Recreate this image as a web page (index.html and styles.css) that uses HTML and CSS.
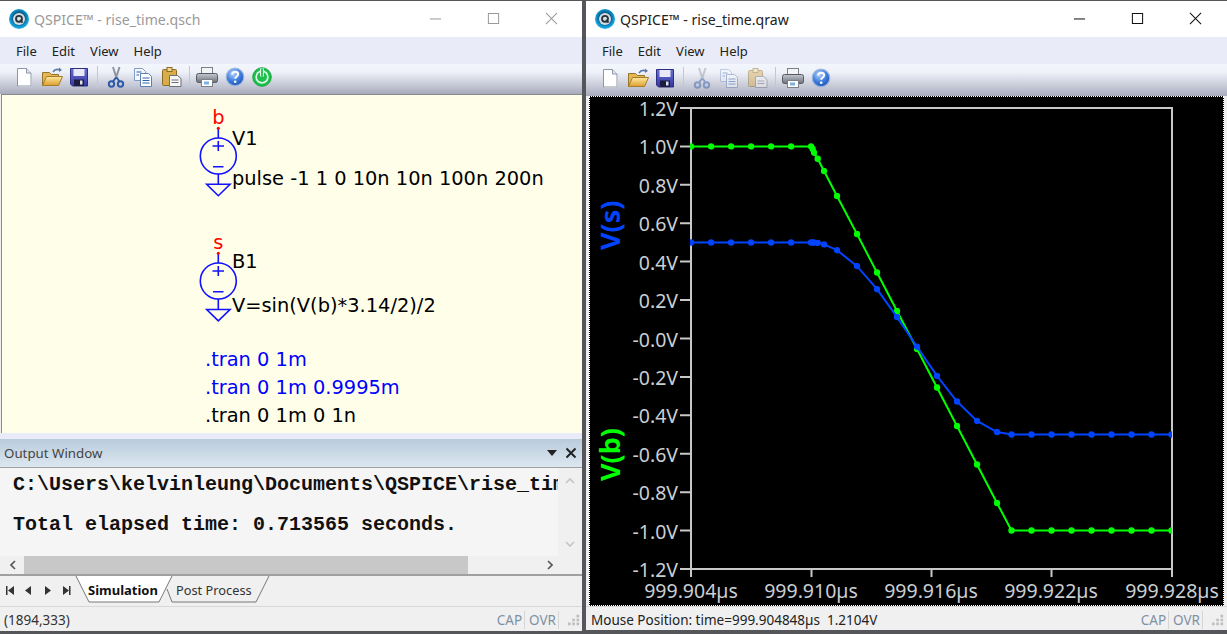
FILE: index.html
```html
<!DOCTYPE html>
<html lang="en">
<head>
<meta charset="utf-8">
<title>QSPICE</title>
<link rel="stylesheet" href="styles.css">
</head>
<body>
<svg class="defs" width="0" height="0" aria-hidden="true">
  <defs>
    <radialGradient id="lg" cx="50%" cy="45%" r="55%"><stop offset="0.55" stop-color="#0b5f8c"/><stop offset="0.8" stop-color="#0f9ad6"/><stop offset="1" stop-color="#27b2e4"/></radialGradient>
    <linearGradient id="fold" x1="0" y1="0" x2="0" y2="1"><stop offset="0" stop-color="#ffe9a0"/><stop offset="1" stop-color="#dd9f2e"/></linearGradient>
    <linearGradient id="fl" x1="0" y1="0" x2="0" y2="1"><stop offset="0" stop-color="#6a6ed8"/><stop offset="1" stop-color="#3438a0"/></linearGradient>
    <linearGradient id="pr" x1="0" y1="0" x2="0" y2="1"><stop offset="0" stop-color="#c4c8d0"/><stop offset="1" stop-color="#6c7078"/></linearGradient>
    <radialGradient id="hp" cx="40%" cy="30%" r="75%"><stop offset="0" stop-color="#b8d4f8"/><stop offset="0.55" stop-color="#3f7fe0"/><stop offset="1" stop-color="#1a4fb0"/></radialGradient>
    <symbol id="i-logo" viewBox="0 0 20 20">
      <circle cx="10" cy="10" r="10" fill="url(#lg)"/>
      <circle cx="10" cy="10" r="6" fill="#d5dde2"/>
      <circle cx="10" cy="9.8" r="3" fill="none" stroke="#27323a" stroke-width="1.8"/>
      <path d="M11 11l2.6 2.6" stroke="#27323a" stroke-width="1.8"/>
    </symbol>
    <symbol id="i-new" viewBox="0 0 24 24">
      <path d="M5.500 3.500h9l4.500 4.500v13h-13.500z" fill="#fff" stroke="#8d96a8"/>
      <path d="M14.500 3.500v4.500h4.500" fill="#e3e8f0" stroke="#8d96a8"/>
      <path d="M19.500 9v12.500h-13" fill="none" stroke="#c2c6ce"/>
    </symbol>
    <symbol id="i-open" viewBox="0 0 24 24">
      <path d="M2.500 20.500v-13h7l2 2h7v3" fill="#e8b64e" stroke="#94752e"/>
      <path d="M2.500 20.500l4-9h16l-4 9z" fill="url(#fold)" stroke="#a47c2a"/>
      <path d="M13 7c1.500-2.500 4.500-3 7-2" fill="none" stroke="#5c78a8" stroke-width="1.500"/>
      <path d="M19 2.500l3 2.500-3 2z" fill="#5c78a8"/>
    </symbol>
    <symbol id="i-save" viewBox="0 0 24 24">
      <path d="M3.500 3.500h17v17.500h-15l-2-2z" fill="url(#fl)" stroke="#2c2f80"/>
      <rect x="6.500" y="4" width="11" height="7" fill="#e7e9f6"/>
      <rect x="7" y="14.500" width="10" height="6.500" fill="#1c1c40"/>
      <rect x="13" y="15.500" width="2.500" height="4" fill="#dfe1ec"/>
    </symbol>
    <symbol id="i-cut" viewBox="0 0 24 24">
      <path d="M9 2l3.500 11M15.500 2l-3.500 11" stroke="#8c94a2" stroke-width="2" fill="none"/>
      <path d="M12 12.500l-3 4M12.500 12.500l3 4" stroke="#2e5aa8" stroke-width="2"/>
      <circle cx="7.500" cy="19" r="2.700" fill="none" stroke="#2e5aa8" stroke-width="2"/>
      <circle cx="16.500" cy="19" r="2.700" fill="none" stroke="#2e5aa8" stroke-width="2"/>
    </symbol>
    <symbol id="i-copy" viewBox="0 0 24 24">
      <path d="M3.500 3.500h8l3 3v9h-11z" fill="#f4f7fc" stroke="#7f9cc8"/>
      <path d="M9.500 8.500h8l3 3v10h-11z" fill="#fff" stroke="#5c7fb4"/>
      <path d="M5.500 7h5M5.500 10h2.500M11.500 13h7M11.500 15.500h7M11.500 18h7" stroke="#2e62b0" stroke-width="1.200"/>
    </symbol>
    <symbol id="i-paste" viewBox="0 0 24 24">
      <rect x="3.500" y="4.500" width="14" height="16" rx="1" fill="#d9ad4c" stroke="#8b6a22"/>
      <rect x="8" y="2.500" width="5" height="4" fill="#f0d890" stroke="#8b6a22"/>
      <path d="M10.500 10.500h8l3.500 3v8h-11.500z" fill="#f6f6f6" stroke="#6a6f7a"/>
      <path d="M12.500 15h7M12.500 17.500h7" stroke="#6a6f7a"/>
    </symbol>
    <symbol id="i-print" viewBox="0 0 24 24">
      <rect x="6.500" y="2.500" width="11" height="7" fill="#f4f4f6" stroke="#7c808a"/>
      <rect x="1.500" y="8.500" width="21" height="9" rx="2" fill="url(#pr)" stroke="#565a62"/>
      <rect x="6.500" y="14.500" width="11" height="7" fill="#fff" stroke="#7c808a"/>
      <rect x="9" y="16.500" width="5" height="3" fill="#7fb0e0"/>
    </symbol>
    <symbol id="i-help" viewBox="0 0 20 20">
      <circle cx="10" cy="10" r="8.800" fill="url(#hp)" stroke="#9db8de" stroke-width="1.200"/>
      <path d="M7 7.500c.3-2 1.600-2.800 3.200-2.800 1.800 0 3 1 3 2.500 0 2.200-3 2.300-3 4.500" fill="none" stroke="#fff" stroke-width="2"/>
      <circle cx="10.200" cy="14.700" r="1.300" fill="#fff"/>
    </symbol>
    <symbol id="i-power" viewBox="0 0 20 20">
      <circle cx="10" cy="10" r="9.300" fill="#1cc04c" stroke="#0e9a38" stroke-width="0.800"/>
      <circle cx="10" cy="10" r="6.700" fill="#dff7e4"/>
      <circle cx="10" cy="10" r="5" fill="#1cc04c"/>
      <path d="M10 1.500v8" stroke="#dff7e4" stroke-width="4"/>
      <path d="M10 2v7.500" stroke="#1cc04c" stroke-width="1.800"/>
    </symbol>
    <symbol id="i-grip" viewBox="0 0 14 14">
      <path fill="#bdbdbd" d="M10 1h3v3h-3zM5 5.500h3v3h-3zM10 5.500h3v3h-3zM0 10h3v3h-3zM5 10h3v3h-3zM10 10h3v3h-3z"/>
    </symbol>
    <marker id="dot-g" viewBox="-3.500 -3.500 7 7" markerWidth="7" markerHeight="7" markerUnits="userSpaceOnUse"><circle r="3.200" fill="#00ff00"/></marker>
    <marker id="dot-b" viewBox="-3.500 -3.500 7 7" markerWidth="7" markerHeight="7" markerUnits="userSpaceOnUse"><circle r="3.200" fill="#0044ff"/></marker>
    <clipPath id="plot-clip"><rect x="690" y="100" width="482" height="480"/></clipPath>
  </defs>
</svg>

<section class="window win-sch">
  <header class="title title-off">
    <svg class="logo"><use href="#i-logo"/></svg>
    <span class="title-text">QSPICE™ - rise_time.qsch</span>
    <div class="caption">
      <svg class="cap-btn" viewBox="0 0 14 14"><path d="M1 7.500h12"/></svg>
      <svg class="cap-btn" viewBox="0 0 14 14"><path d="M1.500 1.500h11v11h-11z"/></svg>
      <svg class="cap-btn" viewBox="0 0 14 14"><path d="M1 1l12 12M13 1l-12 12"/></svg>
    </div>
  </header>
  <nav class="menu"><span>File</span><span>Edit</span><span>View</span><span>Help</span></nav>
  <div class="toolbar">
    <svg class="tool"><use href="#i-new"/></svg>
    <svg class="tool"><use href="#i-open"/></svg>
    <svg class="tool"><use href="#i-save"/></svg>
    <i class="sep"></i>
    <svg class="tool"><use href="#i-cut"/></svg>
    <svg class="tool"><use href="#i-copy"/></svg>
    <svg class="tool"><use href="#i-paste"/></svg>
    <i class="sep"></i>
    <svg class="tool"><use href="#i-print"/></svg>
    <svg class="tool tool-round"><use href="#i-help"/></svg>
    <svg class="tool tool-round"><use href="#i-power"/></svg>
  </div>
  <svg class="schematic" viewBox="2 95 580 338">
    <g class="sym">
      <path d="M218.300 128v10M218.300 174v10M206.700 184.300h23.300l-11.700 11.400zM212.500 146h11.500M218.300 141v10M213 166.700h10.500"/>
      <circle cx="218.300" cy="156" r="18"/>
      <path d="M218.300 253v10M218.300 299v10M206.700 309.500h23.300l-11.700 11.400zM212.500 271h11.500M218.300 266v10M213 291.700h10.500"/>
      <circle cx="218.300" cy="281" r="18"/>
    </g>
    <circle class="pin" cx="218.300" cy="128.300" r="1.500"/>
    <circle class="pin" cx="218.300" cy="253.300" r="1.500"/>
    <text class="sch-text net" x="218.300" y="124">b</text>
    <text class="sch-text net" x="218.300" y="249">s</text>
    <text class="sch-text" x="232" y="145">V1</text>
    <text class="sch-text" x="232" y="185">pulse -1 1 0 10n 10n 100n 200n</text>
    <text class="sch-text" x="232" y="268">B1</text>
    <text class="sch-text" x="232" y="312">V=sin(V(b)*3.14/2)/2</text>
    <text class="sch-text dir" x="205" y="366">.tran 0 1m</text>
    <text class="sch-text dir" x="205" y="394">.tran 0 1m 0.9995m</text>
    <text class="sch-text" x="205" y="422">.tran 0 1m 0 1n</text>
  </svg>
  <div class="strip"></div>
  <div class="out-head">
    <span>Output Window</span>
    <div class="out-btns">
      <svg class="out-btn" viewBox="0 0 12 12"><path d="M1 3h10l-5 6z" fill="#222"/></svg>
      <svg class="out-btn" viewBox="0 0 12 12"><path d="M1.500 1.500l9 9M10.500 1.500l-9 9" stroke="#222" stroke-width="2"/></svg>
    </div>
  </div>
  <div class="out-body">
    <div class="out-text">
      <div class="out-line">C:\Users\kelvinleung\Documents\QSPICE\rise_time.qsch</div>
      <div class="out-line">&nbsp;</div>
      <div class="out-line">Total elapsed time: 0.713565 seconds.</div>
    </div>
    <div class="vscroll">
      <svg class="chev" viewBox="0 0 10 6"><path d="M1 5l4-4 4 4"/></svg>
      <svg class="chev" viewBox="0 0 10 6"><path d="M1 1l4 4 4-4"/></svg>
    </div>
  </div>
  <div class="hscroll">
    <svg class="hchev" viewBox="0 0 6 10"><path d="M5 1l-4 4 4 4"/></svg>
    <div class="hthumb"></div>
    <svg class="hchev" viewBox="0 0 6 10"><path d="M1 1l4 4-4 4"/></svg>
  </div>
  <svg class="tabs" viewBox="0 0 582 30">
    <path class="nav" d="M6 4h1.500v9h-1.500zM14 4v9l-6-4.500zM31 4v9l-6-4.500zM45 4l6 4.500-6 4.500zM63 4l6 4.500-6 4.500zM69 4h1.500v9h-1.500z" transform="translate(0 6)"/>
    <path class="tab-back" d="M167 13l5 13h84l13-26"/>
    <path class="tab-front" d="M76 0l13 26h70l13-26"/>
    <text class="tab-label bold" x="88" y="19">Simulation</text>
    <text class="tab-label" x="176" y="19">Post Process</text>
  </svg>
  <footer class="status">
    <span class="status-main">(1894,333)</span>
    <span class="ind">CAP</span><span class="ind">OVR</span>
    <svg class="grip"><use href="#i-grip"/></svg>
  </footer>
</section>

<section class="window win-plot">
  <header class="title">
    <svg class="logo"><use href="#i-logo"/></svg>
    <span class="title-text">QSPICE™ - rise_time.qraw</span>
    <div class="caption">
      <svg class="cap-btn" viewBox="0 0 14 14"><path d="M1 7.500h12"/></svg>
      <svg class="cap-btn" viewBox="0 0 14 14"><path d="M1.500 1.500h11v11h-11z"/></svg>
      <svg class="cap-btn" viewBox="0 0 14 14"><path d="M1 1l12 12M13 1l-12 12"/></svg>
    </div>
  </header>
  <nav class="menu"><span>File</span><span>Edit</span><span>View</span><span>Help</span></nav>
  <div class="toolbar">
    <svg class="tool"><use href="#i-new"/></svg>
    <svg class="tool"><use href="#i-open"/></svg>
    <svg class="tool"><use href="#i-save"/></svg>
    <i class="sep"></i>
    <svg class="tool off"><use href="#i-cut"/></svg>
    <svg class="tool off"><use href="#i-copy"/></svg>
    <svg class="tool off"><use href="#i-paste"/></svg>
    <i class="sep"></i>
    <svg class="tool"><use href="#i-print"/></svg>
    <svg class="tool tool-round"><use href="#i-help"/></svg>
  </div>
  <div class="plot-wrap">
    <svg class="plot" viewBox="590 97 633 508">
      <path class="frame" d="M691 108h481v469M691 577v-469M691 569h481M811.500 569v8M931.500 569v8M1051.500 569v8M680 108h11M680 146.400h11M680 184.800h11M680 223.200h11M680 261.600h11M680 300h11M680 338.500h11M680 376.900h11M680 415.300h11M680 453.800h11M680 492.200h11M680 530.600h11M680 569h11"/>
      <g class="ylab" transform="translate(0 1)">
        <text x="678" y="115">1.2V</text><text x="678" y="153.400">1.0V</text><text x="678" y="191.800">0.8V</text><text x="678" y="230.200">0.6V</text><text x="678" y="268.600">0.4V</text><text x="678" y="307">0.2V</text><text x="678" y="345.500">-0.0V</text><text x="678" y="383.900">-0.2V</text><text x="678" y="422.300">-0.4V</text><text x="678" y="460.800">-0.6V</text><text x="678" y="499.200">-0.8V</text><text x="678" y="537.600">-1.0V</text><text x="678" y="576">-1.2V</text>
      </g>
      <g class="xlab">
        <text x="691" y="598">999.904µs</text><text x="811" y="598">999.910µs</text><text x="931" y="598">999.916µs</text><text x="1051" y="598">999.922µs</text><text x="1172" y="598">999.928µs</text>
      </g>
      <text class="trace-name blue" transform="translate(620 250) rotate(-90)">V(s)</text>
      <text class="trace-name green" transform="translate(620 481) rotate(-90)">V(b)</text>
      <g clip-path="url(#plot-clip)">
        <polyline class="trace trace-g" points="691,146.400 711,146.400 731,146.400 751,146.400 771,146.400 791,146.400 811,146.400 812.700,149 814,152.700 817.700,158.700 824,171 837,196 857,234 877,272.500 897,311 917,349 937,387.500 957,426 977,464.500 997,503 1011.500,530.500 1031.500,530.500 1051.500,530.500 1071.500,530.500 1091.500,530.500 1111.500,530.500 1131.500,530.500 1151.500,530.500 1171.500,530.500"/>
        <polyline class="trace trace-b" points="691,242.500 711,242.500 731,242.500 751,242.500 771,242.500 791,242.500 811,242.500 812.700,242.500 814,242.600 817.700,242.900 824,244.400 837,250.200 857,266.100 877,289.200 897,317.100 917,346.700 937,375.900 957,401.500 977,420.900 997,432 1011.500,434.500 1031.500,434.500 1051.500,434.500 1071.500,434.500 1091.500,434.500 1111.500,434.500 1131.500,434.500 1151.500,434.500 1171.500,434.500"/>
      </g>
    </svg>
  </div>
  <footer class="status status-plot">
    <span class="status-main dark">Mouse Position: time=999.904848µs&nbsp; 1.2104V</span>
    <span class="ind">CAP</span><span class="ind">OVR</span>
    <svg class="grip"><use href="#i-grip"/></svg>
  </footer>
</section>
</body>
</html>
```
FILE: styles.css
```css
* { box-sizing: border-box; }
html, body { margin: 0; height: 100%; }
body {
  position: relative;
  width: 1227px;
  height: 634px;
  overflow: hidden;
  background: #55565a;
  font-family: "Noto Sans", sans-serif;
}
.defs { position: absolute; }
.window {
  position: absolute;
  top: 1px;
  display: flex;
  flex-direction: column;
  background: #f0f0f0;
}
.win-sch { left: 0; width: 582px; height: 630px; }
.win-plot { left: 586px; width: 641px; height: 629px; }

.title {
  display: flex;
  align-items: center;
  height: 36px;
  flex: none;
  padding-left: 9px;
  background: #fff;
  color: #222;
}
.logo { width: 20px; height: 20px; flex: none; margin-right: 5px; }
.title-text { font-size: 14.1px; }
.title-off { color: #9a9a9a; }
.caption { display: flex; margin-left: auto; gap: 45px; padding: 0 24px 2px 0; }
.win-plot .caption { padding-right: 25px; }
.cap-btn { width: 13px; height: 13px; fill: none; stroke: #111; stroke-width: 1.1; }
.title-off .cap-btn { stroke: #9a9a9a; }

.menu {
  display: flex;
  flex: none;
  align-items: center;
  height: 27px;
  padding-left: 16px;
  gap: 15px;
  background: #e9ecf8;
  color: #222;
  font-size: 13px;
}
.toolbar {
  display: flex;
  flex: none;
  align-items: center;
  height: 30px;
  padding: 0 0 4px 10.5px;
  background: linear-gradient(#f4f6fd 0, #f0f2fa 25%, #c6c9d6 70%, #a8abbc 100%);
}
.win-plot .toolbar { height: 32px; }
.tool { width: 24px; height: 24px; margin: 0 1.75px; flex: none; }
.tool-round { width: 20px; height: 20px; margin: 0 3.75px; }
.off { opacity: 0.45; }
.sep { width: 1px; height: 22px; margin: 0 4px; background: #c4c7d2; flex: none; }

.schematic {
  display: block;
  flex: none;
  width: 581px;
  height: 339px;
  margin-left: 1px;
  background: #ffffe9;
  border-top: 1px solid #8a8a8a;
  border-left: 1px solid #8a8a8a;
}
.sym { fill: none; stroke: #1212ff; stroke-width: 1.6; }
.pin { fill: #ff0000; }
.sch-text { font-family: "DejaVu Sans", sans-serif; font-size: 19.4px; fill: #000; }
.net { fill: #ff0000; text-anchor: middle; }
.dir { fill: #0000ff; }
.strip { height: 6px; flex: none; background: #e9ecf8; }

.out-head {
  display: flex;
  flex: none;
  align-items: center;
  justify-content: space-between;
  height: 28px;
  padding: 0 4px;
  background: linear-gradient(#b9cbdb, #dce7f0);
  color: #444;
  font-size: 13.3px;
}
.out-btns { display: flex; gap: 7px; padding-right: 1px; }
.out-btn { width: 12px; height: 12px; }
.out-body {
  display: flex;
  flex: none;
  height: 89px;
  background: #f0f0f0;
  border-top: 1px solid #a0a0a0;
}
.out-text {
  flex: none;
  width: 558px;
  padding: 7px 0 0 13px;
  background: #f5f5f5;
  overflow: hidden;
  white-space: nowrap;
  font-family: "Liberation Mono", monospace;
  font-weight: 700;
  font-size: 20px;
  line-height: 20px;
  color: #111;
}
.vscroll {
  flex: 1;
  display: flex;
  flex-direction: column;
  align-items: center;
  justify-content: space-between;
  padding: 10px 0 9px;
}
.chev { width: 10px; height: 6px; fill: none; stroke: #c4c4c4; stroke-width: 1.6; }
.hscroll {
  display: flex;
  flex: none;
  align-items: center;
  height: 20px;
  padding: 0 29px 0 10px;
  background: #f0f0f0;
  border-bottom: 2px solid #a0a0a0;
}
.hchev { width: 6px; height: 10px; flex: none; fill: none; stroke: #555; stroke-width: 1.6; }
.hthumb {
  align-self: stretch;
  width: 444px;
  margin: 0 auto 0 8px;
  background: #c8c8c8;
}
.tabs { display: block; flex: none; width: 582px; height: 30px; background: #f0f0f0; }
.nav { fill: #333; }
.tab-back { fill: #f0f0f0; stroke: #777; }
.tab-front { fill: #fff; stroke: #777; }
.tab-label { font-size: 12.8px; fill: #333; }
.bold { font-size: 13px; font-weight: 700; fill: #111; }

.status {
  display: flex;
  flex: none;
  align-items: center;
  height: 24px;
  padding-top: 3px;
  background: #f0f0f0;
  border-top: 1px solid #d8d8d8;
  font-size: 13.5px;
  color: #333;
}
.status-plot { height: 23px; padding-top: 4px; }
.status-main { margin-right: auto; padding-left: 4px; }
.dark { padding-left: 5px; color: #222; }
.ind {
  padding: 0 2px 0 4px;
  color: #7f90a2;
  border-right: 1px solid #d6d6d6;
}
.grip { width: 12px; height: 12px; margin: 0 2px 0 9px; flex: none; }
.status-plot .grip { margin-right: 3px; }

.plot-wrap {
  flex: none;
  height: 510px;
  margin: 0 3px 0 3px;
  padding: 0;
  background: #000;
  border: 1px dotted #fff;
}
.plot { display: block; width: 633px; height: 508px; }
.frame { fill: none; stroke: #c8c8c8; stroke-width: 2; }
.ylab text, .xlab text { font-size: 19.5px; fill: #c9cfd2; }
.ylab text { text-anchor: end; }
.xlab text { text-anchor: middle; }
.trace-name { font-weight: 700; font-size: 27px; }
.blue { fill: #0044ff; }
.green { fill: #00ff00; }
.trace { fill: none; stroke-width: 2; }
.trace-g { stroke: #00ff00; marker: url(#dot-g); }
.trace-b { stroke: #0044ff; marker: url(#dot-b); }
```
